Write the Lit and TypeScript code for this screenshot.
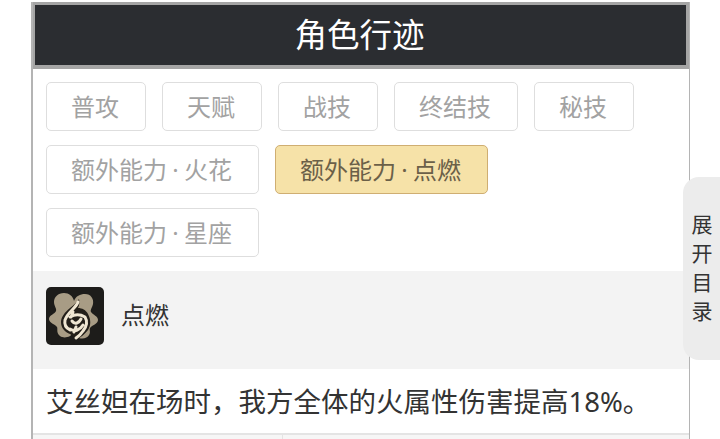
import { LitElement, html, css } from 'lit';
import { customElement } from 'lit/decorators.js';
import { classMap } from 'lit/directives/class-map.js';

const TABS = [
  { label: ['普攻'] },
  { label: ['天赋'] },
  { label: ['战技'] },
  { label: ['终结技'] },
  { label: ['秘技'] },
  { label: ['额外能力', '火花'] },
  { label: ['额外能力', '点燃'], active: true },
  { label: ['额外能力', '星座'] },
];

@customElement('app-root')
export class AppRoot extends LitElement {
  static styles = css`
    :host {
      display: block;
      position: relative;
      height: 439px;
      overflow: hidden;
      background: #fff;
      font-family: "Noto Sans", "Noto Sans CJK SC", sans-serif;
    }

    .page {
      margin: 2px 30px 0 31px;
      height: 437px;
      border-left: 2px solid #b4b4b4;
      border-right: 1px solid #b4b4b4;
      display: flex;
      flex-direction: column;
      overflow: hidden;
    }

    .title {
      margin-left: -1px;
      height: 60px;
      flex: none;
      padding-right: 2px;
      border: 3px solid #a5a5a5;
      border-bottom-width: 4px;
      background: #2b2d31;
      color: #fff;
      font-family: "Noto Sans CJK SC", sans-serif;
      font-size: 32.5px;
      line-height: 55px;
      text-align: center;
    }

    .tabs {
      display: flex;
      flex-wrap: wrap;
      gap: 14px 16px;
      padding: 13px 0 14px 13px;
    }

    .tab {
      height: 49px;
      box-sizing: border-box;
      padding: 0 26px 0 24px;
      border: 1px solid #dedede;
      border-radius: 5px;
      color: #a2a2a2;
      font-family: "Noto Sans CJK SC", sans-serif;
      font-size: 24px;
      line-height: 45px;
      white-space: nowrap;
    }

    .tab.active {
      background: #f6e2a8;
      border-color: #cfae72;
      color: #6b6048;
    }

    .dot {
      display: inline-block;
      width: 17px;
      text-align: center;
      font-family: "Noto Sans", sans-serif;
    }

    .skill {
      display: flex;
      align-items: center;
      gap: 17px;
      height: 98px;
      box-sizing: border-box;
      flex: none;
      padding: 0 0 8px 13px;
      background: #f3f3f3;
      color: #333;
      font-family: "Noto Sans CJK SC", sans-serif;
      font-size: 24px;
    }

    .skill span {
      padding-bottom: 6px;
    }

    .icon {
      width: 58px;
      height: 58px;
      display: block;
    }

    .desc {
      height: 64px;
      flex: none;
      padding-left: 13px;
      color: #333;
      font-size: 27.5px;
      line-height: 66px;
      white-space: nowrap;
    }

    .table {
      flex: 1;
      display: grid;
      grid-template-columns: 249px 1fr;
      border-top: 2px solid #e4e4e4;
      background: #f6f6f6;
    }

    .table div + div {
      border-left: 1px solid #e4e4e4;
    }

    .toc {
      position: absolute;
      right: 0;
      top: 177px;
      width: 37px;
      height: 183px;
      box-sizing: border-box;
      padding: 32px 0 0 1px;
      border-radius: 16px 0 0 16px;
      background: #ececec;
      color: #333;
      font-family: "Noto Sans CJK SC", sans-serif;
      font-size: 21px;
      line-height: 29px;
      text-align: center;
    }
  `;

  renderIcon() {
    return html`<svg class="icon" viewBox="0 0 58 58">
      <rect width="58" height="58" rx="5" fill="#1d1c1a" />
      <path
        fill="#a89c85"
        d="M18 6c5 0 9 3 10 8 2-5 6-7 11-7 6 0 9 5 8 10-1 4-3 6-2 8 2 3 7 4 7 8 0 4-6 5-8 8-1 2 1 4-1 7-2 4-9 5-13 1-2-1-2-2-3-3-2 4-9 6-13 3-4-3-2-7-3-9-2-3-8-4-8-8 0-4 6-5 7-8 1-2-2-5-2-9 0-5 4-9 10-9z"
      />
      <path
        fill="#231f19"
        d="M33 12c1 4 0 7-1 9 4 0 8 2 10 6 3 6 3 11 0 16-3 4-7 7-12 10-1-2-3-4-6-6-5-2-9-6-9-12 0-5 4-10 9-14 4-3 7-6 9-9z"
      />
      <path
        fill="none"
        stroke="#efe6d2"
        stroke-width="3"
        stroke-linecap="round"
        stroke-linejoin="round"
        d="M32 15c-2 6-10 10-13 18-1 5 1 8 5 10M24 30c5-3 10-3 15 0 3 5 2 9-2 14-2 3-4 5-7 7M26 34c3 4 7 2 9-2M24 42c5 3 10 1 13-4M27 25l-2 5M30 40l-2 5"
      />
    </svg>`;
  }

  render() {
    return html`
      <div class="page">
        <div class="title">角色行迹</div>
        <div class="tabs">
          ${TABS.map(
            (t) => html`<div class=${classMap({ tab: true, active: !!t.active })}>
              ${t.label[0]}${t.label[1] ? html`<span class="dot">·</span>${t.label[1]}` : ''}
            </div>`
          )}
        </div>
        <div class="skill">
          ${this.renderIcon()}
          <span>点燃</span>
        </div>
        <div class="desc">艾丝妲在场时\uFF0C我方全体的火属性伤害提高18%。</div>
        <div class="table"><div></div><div></div></div>
      </div>
      <div class="toc">展<br />开<br />目<br />录</div>
    `;
  }
}
